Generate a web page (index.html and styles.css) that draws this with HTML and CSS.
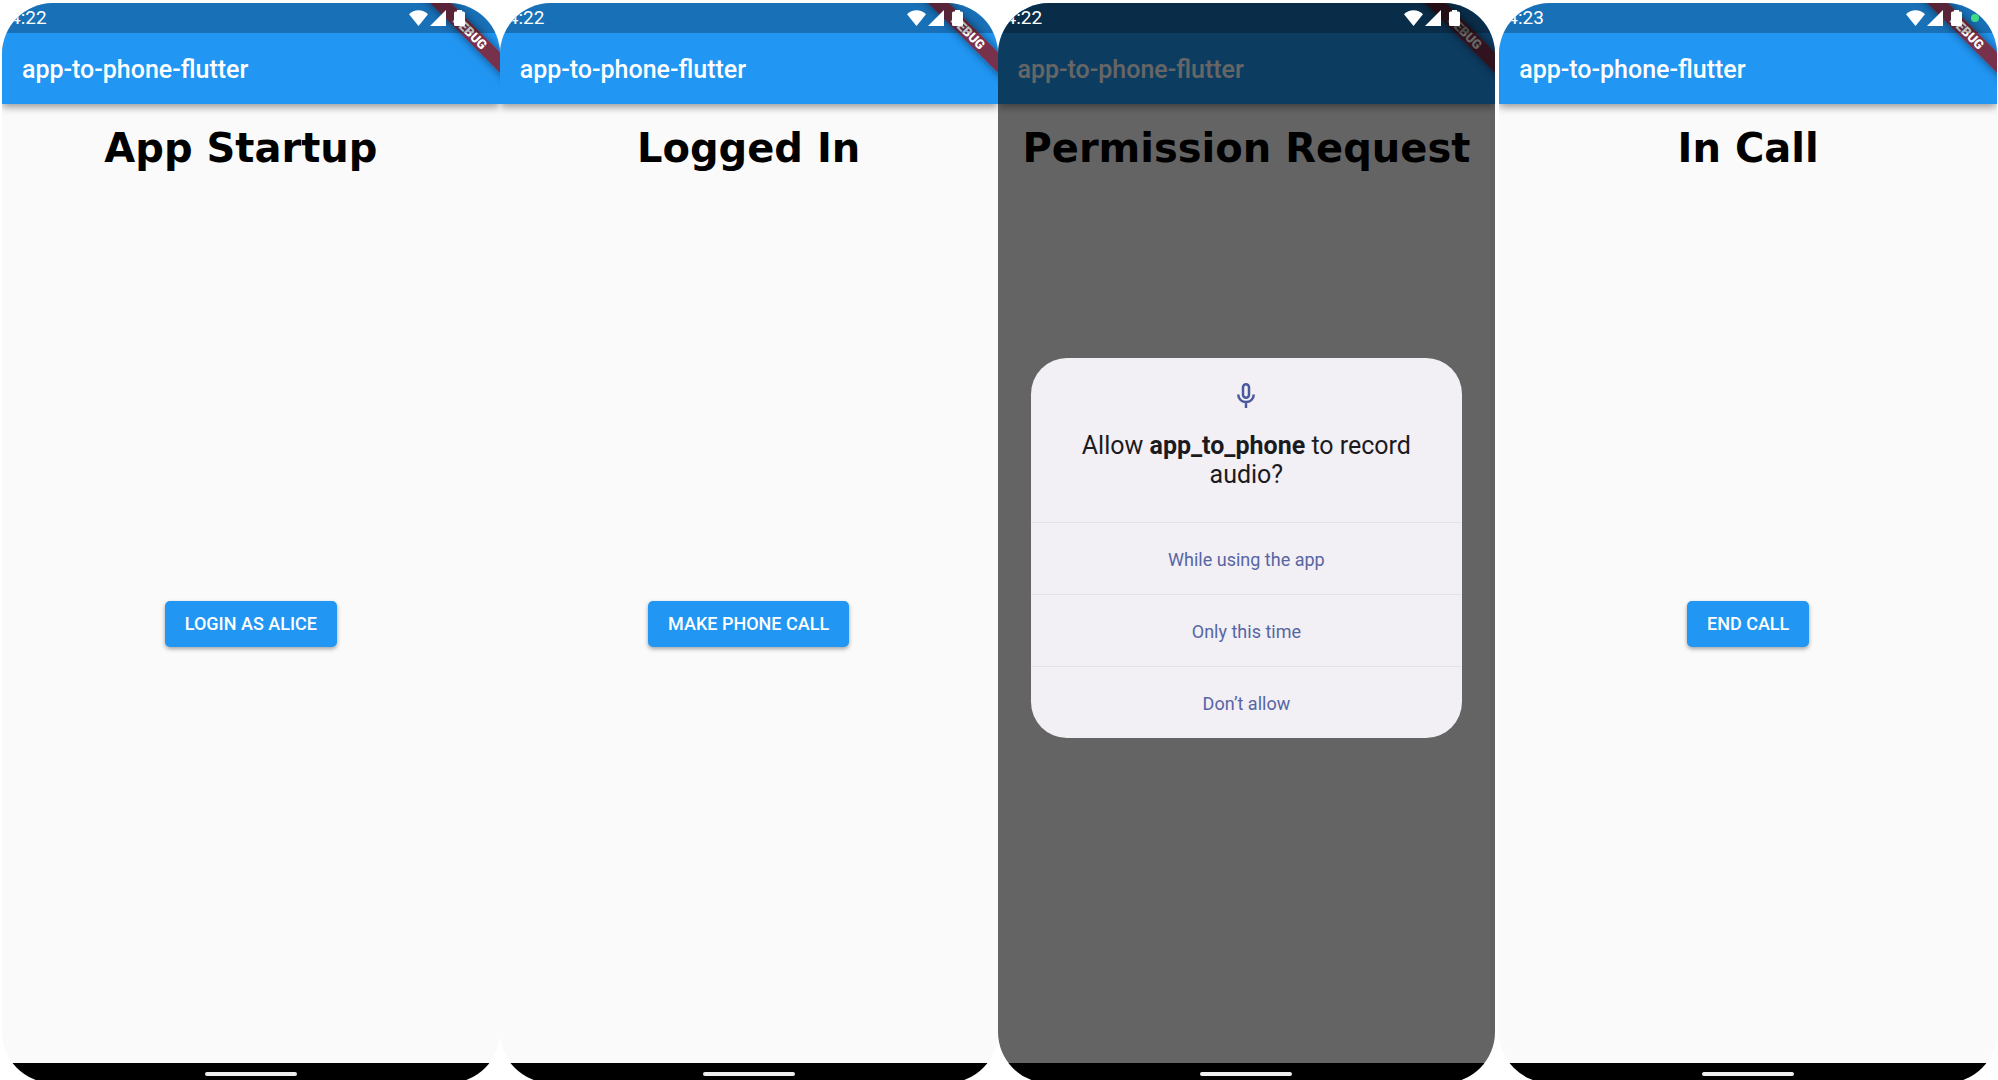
FILE: index.html
```html
<!DOCTYPE html>
<html lang="en">
<head>
<meta charset="utf-8">
<title>app-to-phone-flutter</title>
<link rel="stylesheet" href="styles.css">
</head>
<body>
<svg class="sprite" aria-hidden="true">
  <symbol id="wifi" viewBox="0 0 19 16"><path d="M9.500 16L0 4.200C5-1.200 14-1.200 19 4.200Z"/></symbol>
  <symbol id="signal" viewBox="0 0 16 16"><path d="M16 0V16H0Z"/></symbol>
  <symbol id="battery" viewBox="0 0 11 16"><path d="M3 0H8V1.500H9.500Q11 1.500 11 3V14.500Q11 16 9.500 16H1.500Q0 16 0 14.500V3Q0 1.500 1.500 1.500H3Z"/></symbol>
</svg>
<main class="screens">
  <section class="phone">
    <header class="app-header">
      <div class="status-bar">
        <span class="clock">4:22</span>
        <svg class="wifi"><use href="#wifi"/></svg>
        <svg class="signal"><use href="#signal"/></svg>
        <svg class="battery"><use href="#battery"/></svg>
      </div>
      <p class="app-title">app-to-phone-flutter</p>
      <span class="ribbon">DEBUG</span>
    </header>
    <h1 class="caption caption-startup">App Startup</h1>
    <div class="stage"><button class="action" type="button">LOGIN AS ALICE</button></div>
    <footer class="nav-bar"><span class="nav-handle"></span></footer>
  </section>

  <section class="phone">
    <header class="app-header">
      <div class="status-bar">
        <span class="clock">4:22</span>
        <svg class="wifi"><use href="#wifi"/></svg>
        <svg class="signal"><use href="#signal"/></svg>
        <svg class="battery"><use href="#battery"/></svg>
      </div>
      <p class="app-title">app-to-phone-flutter</p>
      <span class="ribbon">DEBUG</span>
    </header>
    <h1 class="caption">Logged In</h1>
    <div class="stage"><button class="action" type="button">MAKE PHONE CALL</button></div>
    <footer class="nav-bar"><span class="nav-handle"></span></footer>
  </section>

  <section class="phone">
    <header class="app-header">
      <div class="status-bar">
        <span class="clock">4:22</span>
        <svg class="wifi"><use href="#wifi"/></svg>
        <svg class="signal"><use href="#signal"/></svg>
        <svg class="battery"><use href="#battery"/></svg>
      </div>
      <p class="app-title">app-to-phone-flutter</p>
      <span class="ribbon">DEBUG</span>
    </header>
    <h1 class="caption">Permission Request</h1>
    <div class="stage"></div>
    <footer class="nav-bar"><span class="nav-handle"></span></footer>
    <div class="scrim">
      <div class="dialog" role="dialog" aria-labelledby="permission-text">
        <div class="dialog-head">
          <svg class="mic" viewBox="0 0 18 25" fill="none" stroke="currentColor" stroke-width="2.500" aria-hidden="true"><rect x="6" y="1.250" width="6" height="13.500" rx="3"/><path d="M1.250 11.500C1.250 21.500 16.750 21.500 16.750 11.500M9 19V25"/></svg>
          <p class="question" id="permission-text">Allow <strong>app_to_phone</strong> to record audio?</p>
        </div>
        <button class="choice" type="button">While using the app</button>
        <button class="choice" type="button">Only this time</button>
        <button class="choice" type="button">Don’t allow</button>
      </div>
    </div>
  </section>

  <section class="phone phone-call">
    <header class="app-header">
      <div class="status-bar">
        <span class="clock">4:23</span>
        <svg class="wifi"><use href="#wifi"/></svg>
        <svg class="signal"><use href="#signal"/></svg>
        <svg class="battery"><use href="#battery"/></svg>
        <span class="mic-dot"></span>
      </div>
      <p class="app-title">app-to-phone-flutter</p>
      <span class="ribbon">DEBUG</span>
    </header>
    <h1 class="caption">In Call</h1>
    <div class="stage"><button class="action" type="button">END CALL</button></div>
    <footer class="nav-bar"><span class="nav-handle"></span></footer>
  </section>
</main>
</body>
</html>
```

FILE: styles.css
```css
* { box-sizing: border-box; }

body {
  margin: 0;
  background: #fff;
  font-family: Roboto, "Liberation Sans", sans-serif;
}

.sprite { display: none; }

.screens {
  display: flex;
  height: 100vh;
  padding: 3px 1px 0 2px;
  overflow: hidden;
}

.phone {
  position: relative;
  display: flex;
  flex: 1 1 0;
  flex-direction: column;
  min-width: 0;
  height: 100vh;
  border-radius: 51px;
  overflow: hidden;
  background: #fafafa;
}

.phone-call { margin-left: 4px; }

.app-header {
  flex: none;
  background: #2196f3;
  box-shadow: 0 3px 8px rgba(0, 0, 0, .4);
  color: #fff;
}

.status-bar {
  position: relative;
  z-index: 3;
  display: flex;
  align-items: center;
  height: 30px;
  padding: 0 35px 0 8px;
  background: rgba(0, 0, 0, .25);
}

.status-bar svg { fill: #fff; }
.clock { flex: 1; font-size: 19px; line-height: 32px; }
.wifi { width: 19px; height: 16px; }
.signal { width: 16px; height: 16px; margin-left: 2px; }
.battery { width: 11px; height: 16px; margin-left: 8px; }

.mic-dot {
  position: absolute;
  top: 11px;
  right: 18px;
  width: 8px;
  height: 8px;
  border-radius: 50%;
  background: #3ddc84;
}

.app-title {
  margin: 0;
  padding: 3px 0 0 20px;
  font-size: 25px;
  font-weight: 500;
  line-height: 68px;
}

.ribbon {
  position: absolute;
  z-index: 1;
  top: 22px;
  right: -40px;
  width: 140px;
  background: rgba(143, 24, 32, .8);
  box-shadow: 0 0 8px rgba(0, 0, 0, .5);
  font-size: 13px;
  font-weight: 900;
  line-height: 15px;
  text-align: center;
  transform: rotate(45deg);
}

.caption {
  flex: none;
  margin: 0;
  padding-top: 20px;
  color: #000;
  font-family: "DejaVu Sans", Verdana, sans-serif;
  font-size: 40px;
  font-weight: 700;
  line-height: 48px;
  height: 81px;
  text-align: center;
  white-space: nowrap;
}

.caption-startup { padding-right: 20px; }

.stage {
  display: flex;
  flex: 1;
  align-items: center;
  justify-content: center;
}

.action {
  height: 46px;
  padding: 0 20px;
  border: 0;
  border-radius: 5px;
  background: #2196f3;
  box-shadow: 0 2px 4px rgba(0, 0, 0, .35);
  color: #fff;
  font: 500 18px/46px Roboto, "Liberation Sans", sans-serif;
}

.nav-bar {
  position: relative;
  z-index: 3;
  display: flex;
  flex: none;
  justify-content: center;
  height: 20px;
  padding-top: 9px;
  background: #000;
}

.nav-handle {
  width: 92px;
  height: 4px;
  border-radius: 2px;
  background: #eee;
}

.scrim {
  position: absolute;
  z-index: 2;
  inset: 0;
  display: flex;
  align-items: center;
  justify-content: center;
  padding: 30px 33px 20px;
  background: rgba(0, 0, 0, .6);
}

.dialog {
  flex: 1;
  border-radius: 36px;
  overflow: hidden;
  background: #f2eff5;
}

.dialog-head {
  display: flex;
  flex-direction: column;
  align-items: center;
  height: 164px;
  padding: 25px 40px 0;
}

.mic { width: 18px; height: 25px; color: #4a5a9d; }

.question {
  margin: 23px 0 0;
  color: #1b1b1f;
  font-size: 25px;
  font-weight: 400;
  line-height: 29px;
  text-align: center;
}

.question strong { font-weight: 700; }

.choice {
  display: block;
  width: 100%;
  height: 72px;
  padding: 2px 0 0;
  border: 0;
  border-top: 1px solid #e4e2e7;
  background: transparent;
  color: #5666a3;
  font: 400 18px/24px Roboto, "Liberation Sans", sans-serif;
}
```
